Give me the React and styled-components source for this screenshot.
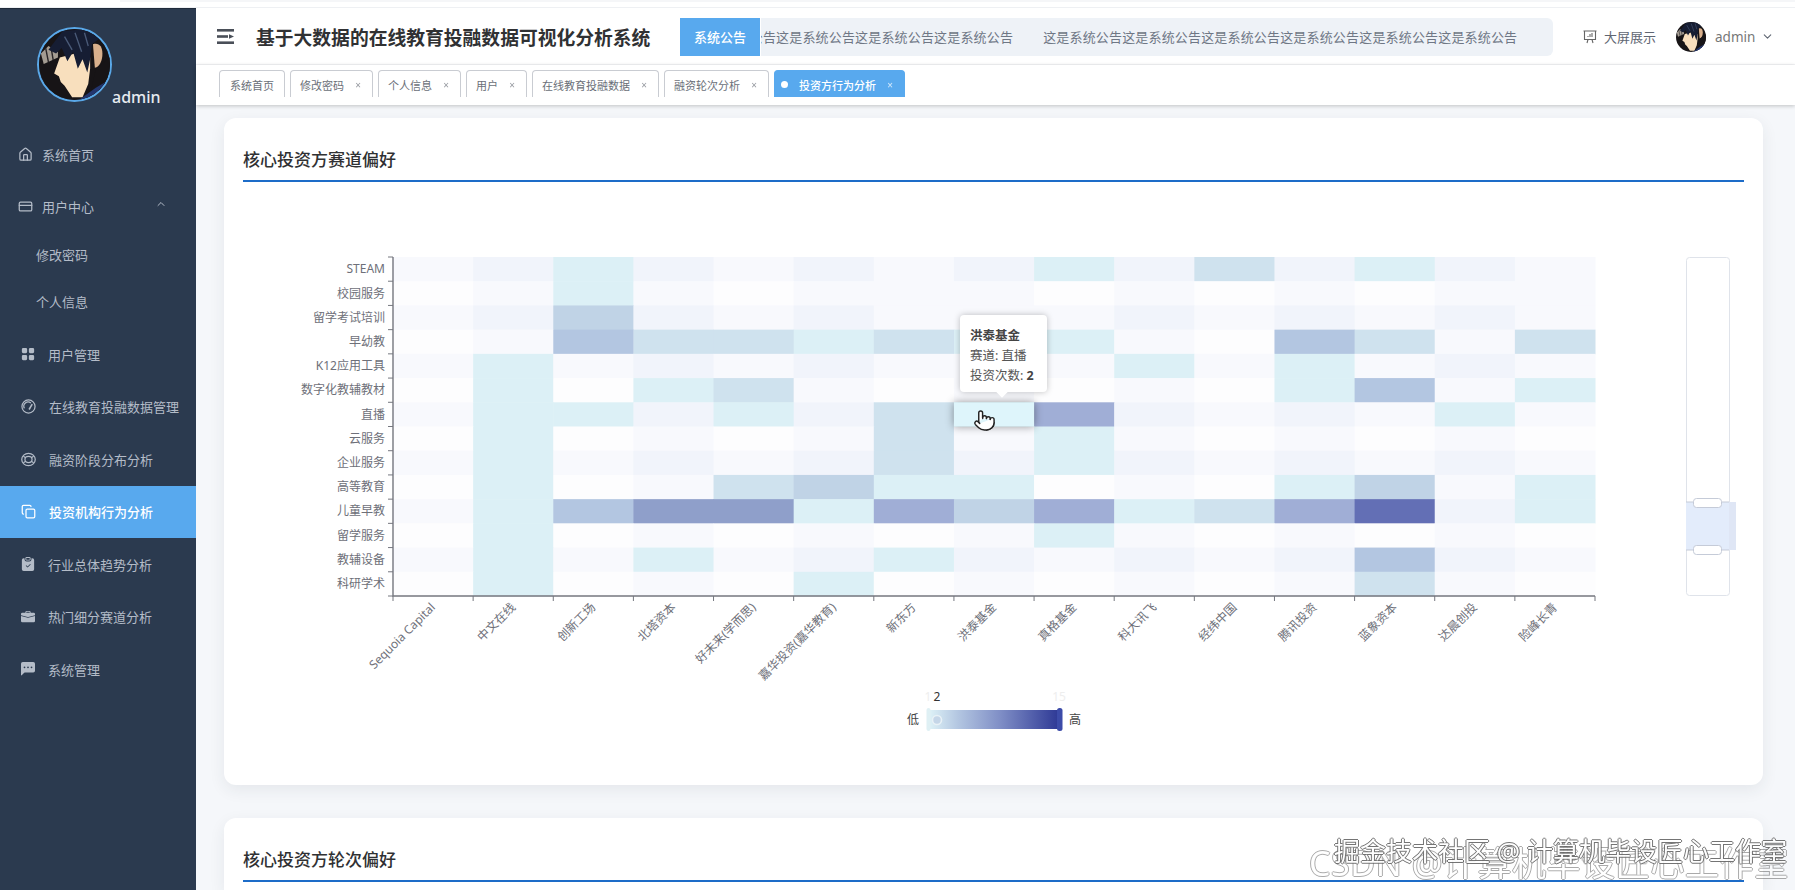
import React from 'react';
import styled, { createGlobalStyle } from 'styled-components';
import {
  Home,
  CreditCard,
  ChevronUp,
  ChevronDown,
  Copy,
  Pointer
} from 'lucide-react';
import {
  BsGridFill,
  BsClipboardCheckFill,
  BsBriefcaseFill,
  BsChatLeftDotsFill
} from 'react-icons/bs';

const GlobalStyle = createGlobalStyle`
  html, body {
    margin: 0;
    padding: 0;
    background: #fff;
    font-family: "Noto Sans", "Noto Sans CJK SC", sans-serif;
  }
  * {
    box-sizing: border-box;
  }
`;

const Page = styled.div`
  position: relative;
  width: 1795px;
  height: 890px;
  overflow: hidden;
  display: flex;
  flex-direction: column;
  background: #fff;
`;

const TopEdge = styled.div`
  flex: 0 0 8px;
  padding-left: 120px;
  border-bottom: 1px solid #eef0f3;

  &::before {
    content: '';
    display: block;
    height: 2px;
    background: #f5f6f8;
  }
`;

const Body = styled.div`
  flex: 1;
  min-height: 0;
  display: flex;
`;

const Sidebar = styled.aside`
  flex: 0 0 196px;
  background: #2b3a4f;
  border-top: 1px solid #1f2a3a;
  color: #b4bcc8;
`;

const Brand = styled.div`
  height: 119px;
  padding: 18px 0 0 37px;
  display: flex;
  align-items: flex-start;
`;

const BrandName = styled.span`
  margin-top: 59px;
  font-size: 16px;
  font-weight: 500;
  line-height: 22px;
  color: #e6eaf0;
`;

const AvatarSvg = styled.svg`
  flex: none;
  display: block;
  width: ${(p) => p.$size}px;
  height: ${(p) => p.$size}px;
  border-radius: 50%;
  border: ${(p) => (p.$ring ? '2px solid #5aa8e8' : 'none')};
`;

const MenuItem = styled.div`
  height: ${(p) => (p.$sub ? 47 : 52.5)}px;
  display: flex;
  align-items: center;
  gap: ${(p) => (p.$wide ? 13 : 9)}px;
  padding-left: ${(p) => (p.$sub ? 36 : p.$wide ? 21 : 18)}px;
  font-size: 13px;
  background: ${(p) => (p.$active ? '#58a9ee' : 'transparent')};
  color: ${(p) => (p.$active ? '#fff' : 'inherit')};
  font-weight: ${(p) => (p.$active ? 500 : 400)};

  svg {
    flex: none;
  }
`;

const SubMenu = styled.div`
  margin: -2px 0 3px;
`;

const MenuArrow = styled.span`
  display: flex;
  margin-left: 52px;
  margin-top: -6px;
`;

const RingIcon = () => (
  <svg width="15" height="15" viewBox="0 0 16 16" fill="none" stroke="currentColor" strokeWidth="1.3">
    <ellipse cx="8" cy="8" rx="7.2" ry="6.6" />
    <ellipse cx="8" cy="8" rx="3.8" ry="3.3" />
    <path d="M2.5 4.5l2.6 1.6M13.5 4.5l-2.6 1.6M2.5 11.5l2.6-1.6M13.5 11.5l-2.6-1.6" />
  </svg>
);

const DialIcon = () => (
  <svg width="15" height="15" viewBox="0 0 16 16" fill="none" stroke="currentColor" strokeWidth="1.3">
    <circle cx="8" cy="8" r="7" />
    <path d="M3.6 10A4.6 4.6 0 0 1 10.5 4.2" />
    <path d="M12 5.4L8.6 11.2" strokeWidth="1.6" />
  </svg>
);

const Main = styled.div`
  flex: 1;
  min-width: 0;
  display: flex;
  flex-direction: column;
`;

const HeaderBar = styled.header`
  flex: 0 0 57px;
  display: flex;
  align-items: center;
  padding: 1px 0 0 21px;
  border-bottom: 1px solid #f4f5f7;

  > svg {
    flex: none;
  }
`;

const Title = styled.h1`
  margin: 2px 29px 0 22px;
  width: 395px;
  flex: none;
  font-size: 18.8px;
  line-height: 26px;
  font-weight: 700;
  white-space: nowrap;
  color: #303133;
`;

const Notice = styled.div`
  flex: none;
  width: 873px;
  height: 38px;
  display: flex;
  font-size: 13px;
`;

const NoticeLabel = styled.div`
  flex: 0 0 80px;
  display: flex;
  align-items: center;
  justify-content: center;
  background: #58a9ee;
  color: #fff;
  font-weight: 500;
`;

const NoticeTrack = styled.div`
  flex: 1;
  min-width: 0;
  margin-left: 1px;
  display: flex;
  align-items: center;
  overflow: hidden;
  background: #eef2f7;
  border-radius: 0 6px 6px 0;
  color: #6f7785;
`;

const NoticeText = styled.div`
  display: flex;
  gap: 30px;
  flex: none;
  white-space: nowrap;
  letter-spacing: 0.17px;
  transform: translateX(-222px);
`;

const HeaderRight = styled.div`
  flex: none;
  display: flex;
  align-items: center;
  margin-left: 30px;
  font-size: 13px;
  white-space: nowrap;
  color: #5f6672;
`;

const BigScreen = styled.div`
  display: flex;
  align-items: center;
  gap: 7px;
  margin-right: 20px;
`;

const UserName = styled.span`
  margin: 0 6px 0 9px;
  font-size: 13.5px;
  color: #777;
`;

const TabsBar = styled.nav`
  flex: 0 0 40px;
  display: flex;
  gap: 5px;
  padding: 5px 0 0 23px;
  position: relative;
  background: #fff;
  box-shadow: 0 1px 4px rgba(0, 0, 0, 0.22);
`;

const Tab = styled.div`
  height: 27px;
  display: flex;
  align-items: center;
  padding: 1px ${(p) => (p.$fixed ? 10 : 9)}px 0 ${(p) => (p.$active ? 6 : p.$fixed ? 10 : 9)}px;
  font-size: 11px;
  white-space: nowrap;
  border: 1px solid ${(p) => (p.$active ? '#58a9ee' : '#c9ccd2')};
  border-bottom: none;
  border-radius: 4px 4px 0 0;
  background: ${(p) => (p.$active ? '#58a9ee' : '#fff')};
  color: ${(p) => (p.$active ? '#fff' : '#6a6f78')};
  font-weight: ${(p) => (p.$active ? 500 : 400)};
`;

const TabDot = styled.i`
  width: 7px;
  height: 7px;
  margin-right: 11px;
  border-radius: 50%;
  background: #fff;
`;

const TabClose = styled.span`
  width: 10px;
  margin-left: 9px;
  font-size: 10px;
  text-align: center;
  opacity: 0.7;
`;

const Content = styled.main`
  flex: 1;
  min-height: 0;
  overflow: hidden;
  padding: 13px 32px 0 28px;
  background: #f5f7fa;
  display: flex;
  flex-direction: column;
  gap: 33px;
`;

const Card = styled.section`
  flex: ${(p) => (p.$grow ? '1 0 auto' : '0 0 667px')};
  padding: 0 19px;
  background: #fff;
  border-radius: 12px 12px ${(p) => (p.$grow ? '0 0' : '12px 12px')};
  box-shadow: 0 5px 16px rgba(40, 50, 70, 0.08);
`;

const CardTitle = styled.h2`
  margin: 0;
  height: 64px;
  padding-top: 29px;
  border-bottom: 2px solid #1d6cc8;
  font-size: 17px;
  line-height: 25px;
  font-weight: 500;
  color: #303133;
`;

const Chart = styled.div`
  position: relative;
  height: 600px;
`;

const ChartSvg = styled.svg`
  display: block;
`;

const RowLabel = styled.text`
  font-size: 12px;
  fill: #6e7079;
  text-anchor: end;
  dominant-baseline: middle;
`;

const ColLabel = styled.text`
  font-size: 12px;
  fill: #6e7079;
  text-anchor: end;
`;

const HoverCell = styled.rect`
  fill: #def5fb;
  filter: drop-shadow(0 0 4px rgba(0, 0, 0, 0.4));
`;

const ScaleText = styled.text`
  font-size: 12px;
  fill: ${(p) => p.$color};
  text-anchor: middle;
`;

const Tooltip = styled.div`
  position: absolute;
  left: 717px;
  top: 133px;
  width: 87px;
  height: 77px;
  padding: 11px 10px;
  background: #fff;
  border-radius: 4px;
  box-shadow: 0 0 6px rgba(0, 0, 0, 0.25);
  font-size: 12.5px;
  line-height: 20px;
  color: #555;
  white-space: nowrap;

  &::after {
    content: '';
    position: absolute;
    left: 38px;
    bottom: -4px;
    width: 8px;
    height: 8px;
    background: #fff;
    transform: rotate(45deg);
  }

  b {
    color: #444;
    font-weight: 700;
  }
`;

const Watermark = styled.div`
  position: absolute;
  left: ${(p) => p.$left}px;
  top: ${(p) => p.$top}px;
  font-size: ${(p) => p.$size}px;
  letter-spacing: ${(p) => p.$spacing}px;
  line-height: 1;
  white-space: nowrap;
  color: #fff;
  opacity: ${(p) => p.$opacity};
  text-shadow: -1px 0 #666, 1px 0 #666, 0 -1px #666, 0 1px #666;
`;

const menuTop = [
  { label: '用户管理', icon: <BsGridFill size={14} /> },
  { label: '在线教育投融数据管理', icon: <DialIcon /> },
  { label: '融资阶段分布分析', icon: <RingIcon /> },
  { label: '投资机构行为分析', icon: <Copy size={15} />, active: true },
  { label: '行业总体趋势分析', icon: <BsClipboardCheckFill size={14} /> },
  { label: '热门细分赛道分析', icon: <BsBriefcaseFill size={14} /> },
  { label: '系统管理', icon: <BsChatLeftDotsFill size={14} /> }
];

const tabs = [
  { label: '系统首页', fixed: true },
  { label: '修改密码' },
  { label: '个人信息' },
  { label: '用户' },
  { label: '在线教育投融数据' },
  { label: '融资轮次分析' },
  { label: '投资方行为分析', active: true }
];

const rowNames = [
  'STEAM', '校园服务', '留学考试培训', '早幼教', 'K12应用工具', '数字化教辅教材', '直播',
  '云服务', '企业服务', '高等教育', '儿童早教', '留学服务', '教辅设备', '科研学术'
];

const colNames = [
  'Sequoia Capital', '中文在线', '创新工场', '北塔资本', '好未来(学而思)', '嘉华投资(嘉华教育)',
  '新东方', '洪泰基金', '真格基金', '科大讯飞', '经纬中国', '腾讯投资', '蓝象资本', '达晨创投', '险峰长青'
];

const levels = [
  '#fdfdfe', '#f8f9fd', '#f1f4fb', '#dcf0f6', '#cfe2ee',
  '#c0d3e6', '#b3c6e1', '#a0aed6', '#8f9fca', '#636fb5'
];

const heat = [
  [1, 2, 3, 2, 1, 2, 1, 2, 3, 2, 4, 2, 3, 2, 1],
  [0, 1, 3, 1, 0, 1, 1, 1, 0, 1, 0, 1, 0, 1, 1],
  [1, 2, 5, 2, 1, 2, 1, 1, 1, 2, 1, 2, 1, 2, 1],
  [0, 1, 6, 4, 4, 3, 4, 3, 3, 1, 0, 6, 4, 1, 4],
  [1, 3, 1, 2, 1, 2, 1, 1, 1, 3, 1, 3, 1, 2, 1],
  [0, 3, 0, 3, 4, 1, 0, 1, 0, 1, 0, 3, 6, 1, 3],
  [1, 3, 3, 2, 3, 2, 4, 3, 7, 2, 1, 2, 1, 3, 1],
  [0, 3, 0, 1, 0, 1, 4, 1, 3, 1, 0, 1, 0, 1, 0],
  [1, 3, 1, 2, 1, 2, 4, 2, 3, 2, 1, 2, 1, 2, 1],
  [0, 3, 0, 1, 4, 5, 3, 3, 0, 1, 0, 3, 5, 1, 3],
  [1, 3, 6, 8, 8, 3, 7, 5, 7, 3, 4, 7, 9, 2, 3],
  [0, 3, 0, 1, 0, 1, 0, 1, 3, 1, 0, 1, 0, 1, 0],
  [1, 3, 1, 3, 1, 2, 3, 2, 1, 2, 1, 2, 6, 2, 1],
  [0, 3, 0, 1, 0, 3, 0, 1, 0, 1, 0, 1, 4, 1, 0]
];

const plot = { x: 393, y: 258, w: 1202, h: 339 };
const cellW = plot.w / colNames.length;
const cellH = plot.h / rowNames.length;

const Heatmap = () => (
  <ChartSvg width="1501" height="600" viewBox="243 183 1501 600">
    <defs>
      <linearGradient id="scale">
        <stop offset="0" stopColor="#dcf0f6" />
        <stop offset="0.22" stopColor="#b3c6e1" />
        <stop offset="0.55" stopColor="#7f8ec6" />
        <stop offset="1" stopColor="#2f3a96" />
      </linearGradient>
    </defs>
    {heat.map((row, r) =>
      row.map((v, c) => (
        <rect
          key={`${r}-${c}`}
          x={plot.x + c * cellW}
          y={plot.y + r * cellH}
          width={cellW + 0.5}
          height={cellH + 0.5}
          fill={levels[v]}
        />
      ))
    )}
    <HoverCell x={plot.x + 7 * cellW} y={plot.y + 6 * cellH} width={cellW} height={cellH} />

    <path
      d={`M${plot.x} ${plot.y}V${plot.y + plot.h}H${plot.x + plot.w}`}
      fill="none"
      stroke="#75777f"
      strokeWidth="1.4"
    />
    {rowNames.map((name, r) => (
      <g key={name}>
        <line
          x1={plot.x - 5}
          x2={plot.x}
          y1={plot.y + r * cellH}
          y2={plot.y + r * cellH}
          stroke="#75777f"
        />
        <RowLabel x={plot.x - 8} y={plot.y + (r + 0.5) * cellH + 1}>
          {name}
        </RowLabel>
      </g>
    ))}
    <line x1={plot.x - 5} x2={plot.x} y1={plot.y + plot.h} y2={plot.y + plot.h} stroke="#75777f" />
    {colNames.map((name, c) => {
      const cx = plot.x + (c + 0.5) * cellW + 3;
      return (
        <g key={name}>
          <line
            x1={plot.x + c * cellW}
            x2={plot.x + c * cellW}
            y1={plot.y + plot.h}
            y2={plot.y + plot.h + 5}
            stroke="#75777f"
          />
          <ColLabel x={cx} y={609} transform={`rotate(-45 ${cx} 609)`}>
            {name}
          </ColLabel>
        </g>
      );
    })}
    <line
      x1={plot.x + plot.w}
      x2={plot.x + plot.w}
      y1={plot.y + plot.h}
      y2={plot.y + plot.h + 5}
      stroke="#75777f"
    />

    <Pointer x={973} y={410} width={23} height={23} fill="#fff" stroke="#222" strokeWidth={1.5} />

    {/* vertical data zoom */}
    <rect x="1686.5" y="258.5" width="43" height="338" rx="3" fill="#fff" stroke="#dfe3ea" />
    <rect x="1729" y="503" width="7" height="48" fill="#dfe6f5" />
    <rect x="1686" y="503" width="43" height="48" fill="#e3ecfb" />
    <path d="M1686 503H1729M1686 551H1729" stroke="#c5cbd8" />
    <rect x="1693.5" y="499.5" width="28" height="9" rx="3" fill="#fff" stroke="#c5cbd8" />
    <rect x="1693.5" y="546.5" width="28" height="9" rx="3" fill="#fff" stroke="#c5cbd8" />

    {/* visual map */}
    <rect x="930" y="711" width="128" height="19" fill="url(#scale)" />
    <rect x="926.5" y="709" width="4" height="23" rx="2" fill="#dff0f4" />
    <rect x="1057" y="709" width="5.5" height="23" rx="2.5" fill="#3c4ba8" />
    <circle cx="937" cy="721" r="4.5" fill="#c5d6e8" stroke="#e8f1f6" strokeWidth="1.6" />
    <ScaleText x="928" y="702" $color="#eeeeee">1</ScaleText>
    <ScaleText x="937" y="702" $color="#333">2</ScaleText>
    <ScaleText x="1059" y="702" $color="#eeeeee">15</ScaleText>
    <ScaleText x="913" y="725" $color="#444">低</ScaleText>
    <ScaleText x="1075" y="725" $color="#444">高</ScaleText>
  </ChartSvg>
);

const Avatar = ({ size, ring }) => (
  <AvatarSvg $size={size} $ring={ring} viewBox="0 0 75 75">
    <rect width="75" height="75" fill="#171416" />
    <path d="M2 26l8-8 10 6v6L5 37z" fill="#a49c92" />
    <path d="M7 20l3 15M13 21l2 12" stroke="#2a2628" strokeWidth="1.5" />
    <path d="M22 30l-6 17 5 3 2 6 4 4 8 12h11l6-14 2-16V30l-16-4z" fill="#f8dfbd" />
    <path d="M57 16c6-2 10 2 10 10s-3 14-8 15z" fill="#d9b08c" />
    <path d="M60 42l15-12v35H55z" fill="#171416" />
    <path d="M42 75l18-13 12-7 3 20z" fill="#23356d" />
    <path
      d="M10 22L25 2 52 0l12 10-8 6-2 16-3 14-5-14-5 10-5-18-6 10-6-14-6 6z"
      fill="#161d33"
    />
    <path d="M27 8l8 14M38 4l7 20M48 4l4 14" stroke="#4a5a78" strokeWidth="1.4" fill="none" />
  </AvatarSvg>
);

const MenuToggle = () => (
  <svg width="17" height="15" viewBox="0 0 17 15" fill="#4a4f58">
    <rect width="17" height="2.6" />
    <rect y="6.2" width="11" height="2.6" />
    <path d="M12 5.2l5 2.3-5 2.3z" />
    <rect y="12.4" width="17" height="2.6" />
  </svg>
);

const ScreenIcon = () => (
  <svg width="14" height="14" viewBox="0 0 14 14" fill="none" stroke="#666" strokeWidth="1.1">
    <path d="M0.5 1H13.5M1.5 1V9.5H12.5V1M5 9.5L4 13M9 9.5L10 13" />
    <path d="M5 7V6M7 7V4M9 7V3" />
  </svg>
);

const App = () => (
  <Page>
    <GlobalStyle />
    <TopEdge />
    <Body>
      <Sidebar>
        <Brand>
          <Avatar size={75} ring />
          <BrandName>admin</BrandName>
        </Brand>
        <MenuItem>
          <Home size={15} />
          系统首页
        </MenuItem>
        <MenuItem>
          <CreditCard size={15} />
          用户中心
          <MenuArrow>
            <ChevronUp size={12} />
          </MenuArrow>
        </MenuItem>
        <SubMenu>
          <MenuItem $sub>修改密码</MenuItem>
          <MenuItem $sub>个人信息</MenuItem>
        </SubMenu>
        {menuTop.map((m) => (
          <MenuItem key={m.label} $wide $active={m.active}>
            {m.icon}
            {m.label}
          </MenuItem>
        ))}
      </Sidebar>
      <Main>
        <HeaderBar>
          <MenuToggle />
          <Title>基于大数据的在线教育投融数据可视化分析系统</Title>
          <Notice>
            <NoticeLabel>系统公告</NoticeLabel>
            <NoticeTrack>
              <NoticeText>
                <span>{'这是系统公告'.repeat(6)}</span>
                <span>{'这是系统公告'.repeat(6)}</span>
              </NoticeText>
            </NoticeTrack>
          </Notice>
          <HeaderRight>
            <BigScreen>
              <ScreenIcon />
              大屏展示
            </BigScreen>
            <Avatar size={30} />
            <UserName>admin</UserName>
            <ChevronDown size={13} />
          </HeaderRight>
        </HeaderBar>
        <TabsBar>
          {tabs.map((t) => (
            <Tab key={t.label} $active={t.active} $fixed={t.fixed}>
              {t.active && <TabDot />}
              {t.label}
              {!t.fixed && <TabClose>×</TabClose>}
            </Tab>
          ))}
        </TabsBar>
        <Content>
          <Card>
            <CardTitle>核心投资方赛道偏好</CardTitle>
            <Chart>
              <Heatmap />
              <Tooltip>
                <b>洪泰基金</b>
                <br />
                赛道: 直播
                <br />
                投资次数: <b>2</b>
              </Tooltip>
            </Chart>
          </Card>
          <Card $grow>
            <CardTitle>核心投资方轮次偏好</CardTitle>
          </Card>
        </Content>
      </Main>
    </Body>
    <Watermark $left={1309} $top={846} $size={34} $spacing={0.6} $opacity={0.55}>
      CSDN @计算机毕设匠心工作室
    </Watermark>
    <Watermark $left={1334} $top={838} $size={26} $spacing={0} $opacity={0.9}>
      掘金技术社区 @ 计算机毕设匠心工作室
    </Watermark>
  </Page>
);

export default App;
